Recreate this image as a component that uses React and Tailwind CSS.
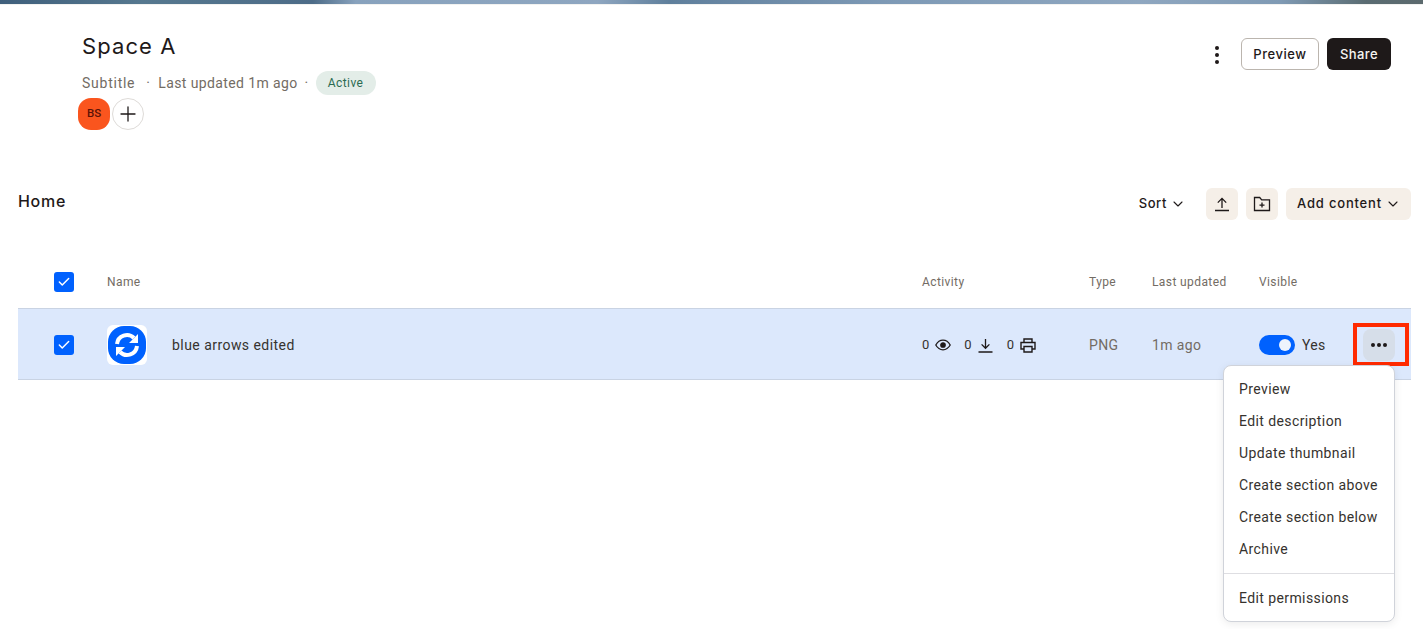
import React from "react";
import { ChevronDown, Check, Plus } from "lucide-react";

const sans = "font-['Roboto','Liberation_Sans',sans-serif]";
const display = "font-['Inter','Liberation_Sans',sans-serif]";
const gridCols = "grid grid-cols-[89px_815px_167px_63px_107px_152px] items-center";
const menuItems = [
  "Preview",
  "Edit description",
  "Update thumbnail",
  "Create section above",
  "Create section below",
  "Archive",
];

const CheckBox = () => (
  <div className="ml-[36px] flex h-5 w-5 items-center justify-center rounded-[3px] bg-[#0061fe]">
    <Check className="h-[14px] w-[14px] text-white" strokeWidth={2.5} />
  </div>
);

const UploadIcon = () => (
  <svg width="16" height="16" viewBox="0 0 16 16" fill="none" stroke="#1e1919" strokeWidth="1.3">
    <path d="M8 12V2.5M3.8 6.6 8 2.4l4.2 4.2M1 14.5h14" />
  </svg>
);

const FolderIcon = () => (
  <svg width="18" height="16" viewBox="0 0 18 16" fill="none" stroke="#1e1919" strokeWidth="1.3">
    <path d="M1.5 1.5h5.2l2 2.4h7.8v10.6H1.5zM9 6.6v5M6.5 9.1h5" />
  </svg>
);

const EyeIcon = () => (
  <svg width="16" height="12" viewBox="0 0 16 12" fill="none" stroke="#1e1919" strokeWidth="1.3">
    <path d="M.8 6C2.6 2.8 5 1.2 8 1.2s5.4 1.6 7.2 4.8C13.4 9.2 11 10.8 8 10.8S2.6 9.2.8 6z" />
    <circle cx="8" cy="6" r="2.2" fill="#1e1919" />
  </svg>
);

const DownloadIcon = () => (
  <svg width="15" height="15" viewBox="0 0 15 15" fill="none" stroke="#1e1919" strokeWidth="1.3">
    <path d="M7.5 1v9M3.6 6.4l3.9 3.9 3.9-3.9M.5 14h14" />
  </svg>
);

const PrintIcon = () => (
  <svg width="16" height="15" viewBox="0 0 16 15" fill="none" stroke="#1e1919" strokeWidth="1.4">
    <path d="M4 4.5V1h8v3.5M4 11H1V4.5h14V11h-3M4 8.5h8V14H4z" />
  </svg>
);

const App = () => {
  return (
    <div className={`relative h-[629px] w-[1423px] overflow-hidden bg-white ${sans}`}>
      {/* banner strip */}
      <div className="h-1 bg-[linear-gradient(90deg,#3f5f7c_0%,#56788f_10%,#4d6c88_22%,#88a2bd_25%,#8ea6c0_42%,#5f7f9c_47%,#7d99b5_62%,#8fa7c0_80%,#7f9ab4_90%,#5a6c72_96%,#5c6a6e_100%)]" />
      <div className="h-px bg-[#f2f2f0]" />

      {/* header */}
      <div className="flex items-start justify-between pl-[78px] pr-[32px] pt-[27px]">
        <div>
          <h1 className={`pl-[4px] text-[22px] leading-[28px] tracking-[1.1px] text-[#1e1919] ${display}`}>Space A</h1>
          <div className="mt-[11px] flex h-[24px] items-center pl-[4px] text-[14px] tracking-[0.38px] text-[#736c64]">
            <span className="tracking-[0.75px]">Subtitle</span>
            <span className="ml-[11px]">·</span>
            <span className="ml-[8px]">Last updated 1m ago</span>
            <span className="ml-[7px]">·</span>
            <span className="ml-[7px] flex h-[24px] w-[60px] items-center justify-center rounded-full bg-[#e3ede8] text-[12px] tracking-[0.4px] text-[#2b6b52]">
              Active
            </span>
          </div>
          <div className="mt-[3px] flex items-center gap-[2px]">
            <div className="flex h-8 w-8 items-center justify-center rounded-[13px] bg-[#fa551e] text-[11.5px] font-medium text-[#5a1208]">
              BS
            </div>
            <div className="flex h-8 w-8 items-center justify-center rounded-full border border-[#dedbd8]">
              <Plus className="h-6 w-6 text-[#1e1919]" strokeWidth={1.3} />
            </div>
          </div>
        </div>
        <div className={`mt-[6px] flex items-center ${display}`}>
          <div className="mr-[22px] mt-[2px] flex flex-col gap-[3px]">
            <span className="h-1 w-1 rounded-full bg-[#1e1919]" />
            <span className="h-1 w-1 rounded-full bg-[#1e1919]" />
            <span className="h-1 w-1 rounded-full bg-[#1e1919]" />
          </div>
          <button className="h-8 w-[78px] rounded-[6px] border border-[#bbb5ae] pt-px text-[13px] font-medium tracking-[0.55px] text-[#1e1919]">
            Preview
          </button>
          <button className="ml-2 h-8 w-[64px] rounded-[6px] bg-[#1e1919] pt-px text-[13px] font-medium tracking-[0.4px] text-[#f7f5f2]">
            Share
          </button>
        </div>
      </div>

      {/* section title + actions */}
      <div className="mt-[58px] flex h-8 items-center justify-between pl-[18px] pr-[12px]">
        <h2 className={`mb-[6px] text-[16px] font-medium tracking-[0.7px] text-[#1e1919] ${display}`}>Home</h2>
        <div className={`flex items-center text-[13px] font-medium tracking-[0.8px] text-[#1e1919] ${display}`}>
          <span className="tracking-[0.6px]">Sort</span>
          <ChevronDown className="ml-[3px] h-4 w-4" strokeWidth={1.6} />
          <button className="ml-[20px] flex h-8 w-8 items-center justify-center rounded-[6px] bg-[#f5efe8]">
            <UploadIcon />
          </button>
          <button className="ml-2 flex h-8 w-8 items-center justify-center rounded-[6px] bg-[#f5efe8]">
            <FolderIcon />
          </button>
          <button className="ml-2 flex h-8 w-[125px] items-center justify-center gap-[3px] rounded-[6px] bg-[#f5efe8] pl-[1px]">
            Add content
            <ChevronDown className="h-4 w-4" strokeWidth={1.6} />
          </button>
        </div>
      </div>

      {/* table */}
      <div className="ml-[18px] w-[1393px]">
        <div className={`${gridCols} mt-[36px] h-[52px] text-[12px] tracking-[0.4px] text-[#736c64]`}>
          <CheckBox />
          <span>Name</span>
          <span>Activity</span>
          <span>Type</span>
          <span>Last updated</span>
          <span>Visible</span>
        </div>
        <div className={`${gridCols} h-[72px] border-y border-[#c9d3e3] bg-[#dce8fc] pt-[2px]`}>
          <CheckBox />
          <div className="flex items-center">
            <div className="flex h-10 w-10 items-center justify-center rounded-[6px] bg-white">
              <svg width="40" height="40" viewBox="0 0 40 40" fill="none">
                <rect x="1" y="1" width="38" height="38" rx="16" fill="#0061fe" />
                <path d="M10 19a10 10 0 0 1 17-6" stroke="white" strokeWidth="4" />
                <path d="M30 21a10 10 0 0 1-17 6" stroke="white" strokeWidth="4" />
                <path d="M31 9v9h-9zM9 31v-9h9z" fill="white" />
              </svg>
            </div>
            <span className="ml-[25px] text-[14px] tracking-[0.45px] text-[#36322e]">blue arrows edited</span>
          </div>
          <div className="flex items-center text-[13px] text-[#36322e]">
            <span>0</span>
            <span className="ml-[6px]"><EyeIcon /></span>
            <span className="ml-[13px]">0</span>
            <span className="ml-[6px] flex"><DownloadIcon /></span>
            <span className="ml-[14px]">0</span>
            <span className="ml-[6px] flex"><PrintIcon /></span>
          </div>
          <span className="text-[14px] tracking-[0.4px] text-[#736c64]">PNG</span>
          <span className="text-[14px] tracking-[0.4px] text-[#736c64]">1m ago</span>
          <div className="flex items-center">
            <div className="flex h-5 w-9 items-center justify-end rounded-full bg-[#0061fe] pr-[4px]">
              <span className="h-3 w-3 rounded-full bg-[#eef3fc]" />
            </div>
            <span className="ml-[7px] w-[29px] text-[14px] tracking-[0.3px] text-[#36322e]">Yes</span>
            <div className="ml-[32px] flex h-8 w-8 items-center justify-center gap-[2px] rounded-[8px] bg-[#d6dee9]">
              <span className="h-1 w-1 rounded-full bg-[#1e1919]" />
              <span className="h-1 w-1 rounded-full bg-[#1e1919]" />
              <span className="h-1 w-1 rounded-full bg-[#1e1919]" />
            </div>
          </div>
        </div>
      </div>

      {/* red annotation */}
      <div className="absolute left-[1353px] top-[323px] h-[43px] w-[56px] border-4 border-[#ff2a00]" />

      {/* dropdown menu */}
      <div className="absolute left-[1223px] top-[365px] h-[257px] w-[172px] rounded-[8px] border border-[#d0d3da] bg-white pt-[7px] text-[14px] tracking-[0.4px] text-[#36322e] shadow-[0_2px_8px_rgba(0,0,0,0.08)]">
        {menuItems.map((item) => (
          <div key={item} className="flex h-8 items-center pl-[15px]">
            {item}
          </div>
        ))}
        <div className="mt-2 h-px bg-[#dedee2]" />
        <div className="mt-2 flex h-8 items-center pl-[15px]">Edit permissions</div>
      </div>
    </div>
  );
};

export default App;
